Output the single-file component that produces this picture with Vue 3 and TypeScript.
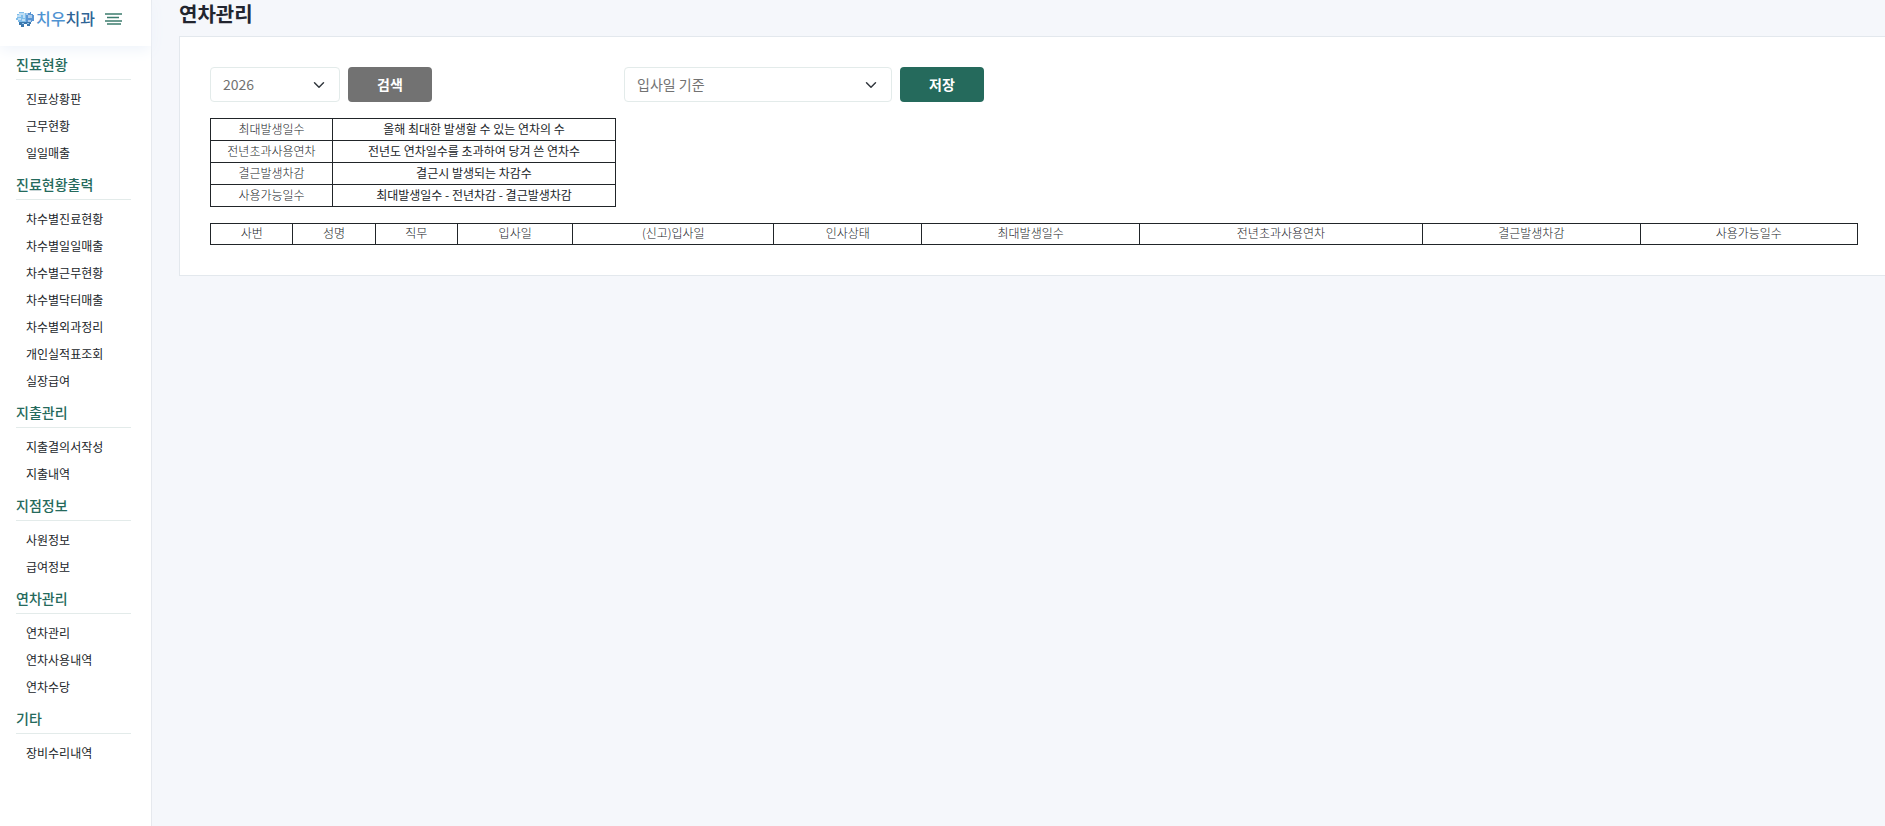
<script setup lang="ts">
import { ref } from 'vue'

interface MenuGroup {
  title: string
  items: string[]
}

const menu: MenuGroup[] = [
  { title: '진료현황', items: ['진료상황판', '근무현황', '일일매출'] },
  {
    title: '진료현황출력',
    items: [
      '차수별진료현황',
      '차수별일일매출',
      '차수별근무현황',
      '차수별닥터매출',
      '차수별외과정리',
      '개인실적표조회',
      '실장급여',
    ],
  },
  { title: '지출관리', items: ['지출결의서작성', '지출내역'] },
  { title: '지점정보', items: ['사원정보', '급여정보'] },
  { title: '연차관리', items: ['연차관리', '연차사용내역', '연차수당'] },
  { title: '기타', items: ['장비수리내역'] },
]

const guide: [string, string][] = [
  ['최대발생일수', '올해 최대한 발생할 수 있는 연차의 수'],
  ['전년초과사용연차', '전년도 연차일수를 초과하여 당겨 쓴 연차수'],
  ['결근발생차감', '결근시 발생되는 차감수'],
  ['사용가능일수', '최대발생일수 - 전년차감 - 결근발생차감'],
]

const columns = [
  { label: '사번', size: 'xs' },
  { label: '성명', size: 'xs' },
  { label: '직무', size: 'xs' },
  { label: '입사일', size: 'sm' },
  { label: '(신고)입사일', size: 'lg' },
  { label: '인사상태', size: 'md' },
  { label: '최대발생일수', size: 'xl' },
  { label: '전년초과사용연차', size: 'xxl' },
  { label: '결근발생차감', size: 'xl' },
  { label: '사용가능일수', size: 'xl' },
]

const year = ref('2026')
const basis = ref('입사일 기준')
</script>

<template>
  <div class="layout">
    <aside class="sidebar">
      <div class="brand">
        <a class="logo" href="#" aria-label="치우치과">
          <svg class="logo-mark" viewBox="0 0 18 16" aria-hidden="true">
            <path d="M1 3h2V1h5v1h2v9H2V9H0V7h1z" fill="#7fbdea" />
            <path d="M10 2h4V1h1v2h2v1h1v6h-2v1h-6z" fill="#5a96d4" />
            <path d="M3 11h12v2h-1v2h-3v-2H8v3H5v-2H3z" fill="#3b78ad" />
            <path d="M0 5h5M3 3h4M2 8h3M8 2v5M11 1v3M13 4v3M15 4v3M6 9h3M12 10h3" fill="none" stroke="#fff" stroke-width="1" />
            <path d="M6 12h2v1H6zM11 12h2v1h-2z" fill="#9ccaf0" />
          </svg>
          <span class="logo-text">치우<span class="logo-dark">치과</span></span>
        </a>
        <button class="toggle" type="button" aria-label="메뉴">
          <svg viewBox="0 0 17 12" aria-hidden="true">
            <path d="M0 1h17M2 4.500h12M0 8h17M2 11h14" fill="none" stroke="#3c7c6e" stroke-width="1.700" />
          </svg>
        </button>
      </div>
      <nav class="menu">
        <section v-for="group in menu" :key="group.title">
          <h2>{{ group.title }}</h2>
          <ul>
            <li v-for="item in group.items" :key="item"><a href="#">{{ item }}</a></li>
          </ul>
        </section>
      </nav>
    </aside>

    <main class="content">
      <h1>연차관리</h1>
      <div class="card">
        <div class="filters">
          <form class="filter search" @submit.prevent>
            <select v-model="year" class="year" aria-label="연도">
              <option>2026</option>
              <option>2025</option>
            </select>
            <button class="btn" type="submit">검색</button>
          </form>
          <form class="filter" @submit.prevent>
            <select v-model="basis" class="basis" aria-label="연차 기준">
              <option>입사일 기준</option>
            </select>
            <button class="btn save" type="submit">저장</button>
          </form>
        </div>

        <table class="guide">
          <tbody>
            <tr v-for="[name, text] in guide" :key="name">
              <th scope="row">{{ name }}</th>
              <td>{{ text }}</td>
            </tr>
          </tbody>
        </table>

        <table class="leave">
          <thead>
            <tr>
              <th v-for="col in columns" :key="col.label" scope="col" :class="col.size">{{ col.label }}</th>
            </tr>
          </thead>
        </table>
      </div>
    </main>
  </div>
</template>

<style>
body {
  margin: 0;
  background: #f5f7fb;
}
</style>

<style scoped>
* {
  box-sizing: border-box;
}
.layout {
  display: flex;
  min-height: 100vh;
  font-family: 'Noto Sans CJK KR', 'Noto Sans', sans-serif;
  font-size: 12px;
  color: #212529;
}
.sidebar {
  flex: 0 0 152px;
  background: #fff;
  border-right: 1px solid #e6e9ee;
}
.brand {
  display: flex;
  align-items: center;
  gap: 10px;
  height: 46px;
  padding: 0 16px 8px;
  box-shadow: 0 4px 14px #eef3fa;
}
.logo {
  display: flex;
  align-items: center;
  gap: 2px;
  text-decoration: none;
}
.logo-mark {
  width: 18px;
  height: 16px;
}
.logo-text {
  padding-bottom: 2px;
  font-size: 16px;
  line-height: 24px;
  font-weight: 500;
  color: #4f93d2;
  white-space: nowrap;
}
.logo-dark {
  color: #2f6496;
}
.toggle {
  display: flex;
  padding: 0;
  border: 0;
  background: none;
}
.toggle svg {
  width: 17px;
  height: 12px;
}
.menu {
  padding-top: 1px;
}
.menu h2 {
  margin: 5px 20px 6px 16px;
  padding-bottom: 2px;
  border-bottom: 1px solid #e3ebea;
  font-size: 14px;
  line-height: 25px;
  font-weight: 500;
  color: #256a5c;
}
.menu ul {
  margin: 0;
  padding: 0 0 0 26px;
  list-style: none;
}
.menu a {
  display: block;
  padding-bottom: 2px;
  line-height: 25px;
  color: #212529;
  text-decoration: none;
}
.content {
  flex: 1;
  min-width: 0;
  padding-left: 27px;
}
h1 {
  margin: 0 0 8px;
  font-size: 20px;
  line-height: 28px;
  font-weight: 700;
  color: #22252f;
}
.card {
  padding: 30px 27px 30px 30px;
  background: #fff;
  border: 1px solid #e3e8ed;
  border-right: 0;
}
.filters {
  display: flex;
  gap: 8px;
  margin-bottom: 16px;
}
.filter {
  display: flex;
  gap: 8px;
}
.search {
  width: 406px;
}
select {
  height: 35px;
  padding: 0 36px 2px 12px;
  appearance: none;
  border: 1px solid #e3ebea;
  border-radius: 4px;
  background: #fff
    url("data:image/svg+xml,%3Csvg xmlns='http://www.w3.org/2000/svg' viewBox='0 0 16 16'%3E%3Cpath fill='none' stroke='%23343a40' stroke-width='2' stroke-linecap='round' stroke-linejoin='round' d='m2 5 6 6 6-6'/%3E%3C/svg%3E")
    no-repeat right 14px center / 12px 12px;
  font: inherit;
  font-size: 14px;
  color: #727272;
}
.year {
  width: 130px;
}
.basis {
  width: 268px;
}
.btn {
  width: 84px;
  height: 35px;
  padding: 0 0 2px;
  border: 0;
  border-radius: 4px;
  background: #727272;
  font: inherit;
  font-size: 14px;
  font-weight: 700;
  color: #fff;
}
.save {
  background: #256a5c;
}
table {
  border-collapse: collapse;
  table-layout: fixed;
}
th,
td {
  height: 22px;
  padding: 0 0 2px;
  border: 1px solid #212529;
  line-height: 18px;
  text-align: center;
}
th {
  font-weight: 300;
  color: #212529;
}
.guide {
  width: 406px;
  margin-bottom: 16px;
}
.guide th {
  width: 122px;
}
.leave {
  width: 100%;
}
.leave th {
  height: 21px;
}
.xs {
  width: 5%;
}
.sm {
  width: 7%;
}
.md {
  width: 9%;
}
.lg {
  width: 12.2%;
}
.xl {
  width: 13.2%;
}
.xxl {
  width: 17.2%;
}
</style>
